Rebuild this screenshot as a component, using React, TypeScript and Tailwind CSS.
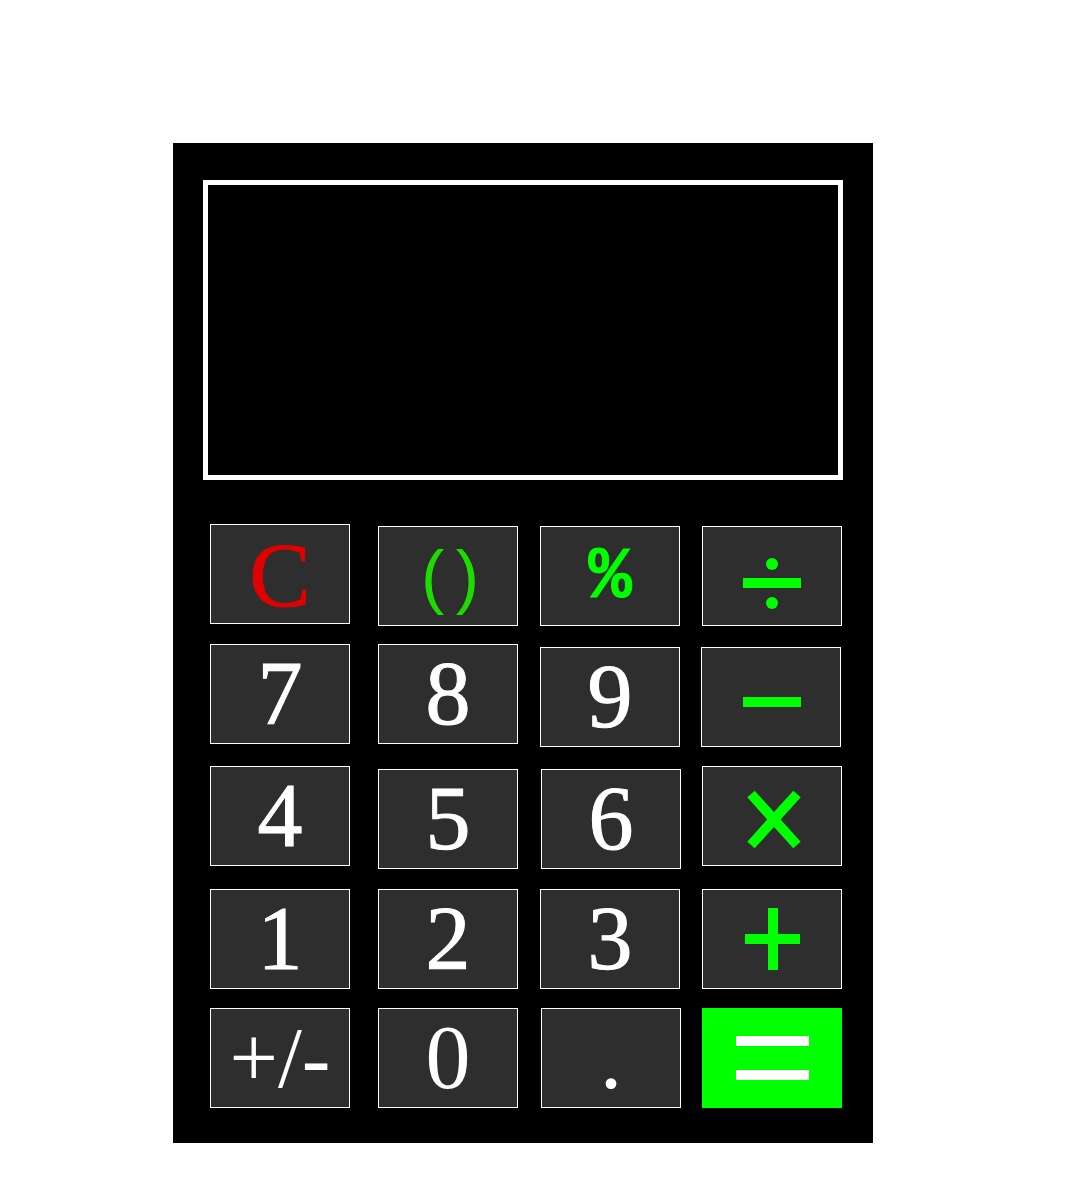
import React from "react";

const btn =
  "w-[140px] h-[100px] shrink-0 bg-[#2e2e2e] border border-white flex items-center justify-center leading-none";
const dg = "text-white text-[90px] [font-family:'Liberation_Serif',serif] [-webkit-text-stroke:1px_#ffffff]";
const lib = "text-white text-[90px] [font-family:'Liberation_Serif',serif]";

function Svg({ children }: { children: React.ReactNode }) {
  return (
    <svg width="138" height="98" viewBox="1 1 138 98" className="block">
      {children}
    </svg>
  );
}

export default function App() {
  return (
    <div className="min-h-[1200px] bg-white pt-[143px] pl-[173px]">
      <div className="w-[700px] h-[1000px] bg-black flex flex-col">
        <div className="ml-[30px] mt-[37px] w-[640px] h-[300px] border-[5px] border-white bg-black" />

        {/* Row 1 */}
        <div className="flex items-start mt-[44px] ml-[37px] h-[102px]">
          <div className={btn}>
            <span className="pt-[2px] text-[#e00000] text-[92px] [font-family:'Liberation_Serif',serif] [-webkit-text-stroke:1px_#e00000]">
              C
            </span>
          </div>
          <div className={`${btn} mt-[2px] ml-[28px]`}>
            <span className="text-[#1ddc00] text-[70px] [font-family:'Liberation_Sans',sans-serif] tracking-[-4px]">( )</span>
          </div>
          <div className={`${btn} mt-[2px] ml-[22px]`}>
            <span className="text-[#00ff00] text-[72px] font-bold [font-family:'Liberation_Mono',monospace] [-webkit-text-stroke:1px_#00ff00] pt-[4px]">
              %
            </span>
          </div>
          <div className={`${btn} mt-[2px] ml-[22px]`}>
            <Svg>
              <rect x="41" y="52" width="58" height="10" fill="#00ff00" />
              <circle cx="70" cy="38" r="6" fill="#00ff00" />
              <circle cx="70" cy="77" r="6" fill="#00ff00" />
            </Svg>
          </div>
        </div>

        {/* Row 2 */}
        <div className="flex items-start mt-[18px] ml-[37px] h-[103px]">
          <div className={`${btn} ${dg}`}>7</div>
          <div className={`${btn} ${dg} ml-[28px]`}>8</div>
          <div className={`${btn} ${dg} mt-[3px] ml-[22px]`}>9</div>
          <div className={`${btn} mt-[3px] ml-[21px]`}>
            <Svg>
              <rect x="42" y="50" width="58" height="10" fill="#00ff00" />
            </Svg>
          </div>
        </div>

        {/* Row 3 */}
        <div className="flex items-start mt-[19px] ml-[37px] h-[103px]">
          <div className={`${btn} ${dg}`}>4</div>
          <div className={`${btn} ${dg} mt-[3px] ml-[28px]`}>5</div>
          <div className={`${btn} ${dg} mt-[3px] ml-[23px]`}>6</div>
          <div className={`${btn} ml-[21px]`}>
            <Svg>
              <line x1="49" y1="28" x2="95" y2="79" stroke="#00ff00" strokeWidth="10" />
              <line x1="95" y1="28" x2="49" y2="79" stroke="#00ff00" strokeWidth="10" />
            </Svg>
          </div>
        </div>

        {/* Row 4 */}
        <div className="flex items-start mt-[20px] ml-[37px] h-[100px]">
          <div className={`${btn} ${dg}`}>1</div>
          <div className={`${btn} ${dg} ml-[28px]`}>2</div>
          <div className={`${btn} ${dg} ml-[22px]`}>3</div>
          <div className={`${btn} ml-[22px]`}>
            <Svg>
              <rect x="66" y="19" width="10" height="62" fill="#00ff00" />
              <rect x="43" y="45" width="55" height="10" fill="#00ff00" />
            </Svg>
          </div>
        </div>

        {/* Row 5 */}
        <div className="flex items-start mt-[19px] ml-[37px] h-[100px]">
          <div className={`${btn} text-white text-[86px] [font-family:'Liberation_Serif',serif]`}>+/-</div>
          <div className={`${btn} ${lib} ml-[28px]`}>0</div>
          <div className={`${btn} ${lib} ml-[23px]`}>.</div>
          <div className={`${btn} ml-[21px] !bg-[#00ff00] !border-[#00ff00]`}>
            <Svg>
              <rect x="34" y="28" width="73" height="10" fill="#ffffff" />
              <rect x="34" y="62" width="73" height="10" fill="#ffffff" />
            </Svg>
          </div>
        </div>
      </div>
    </div>
  );
}
